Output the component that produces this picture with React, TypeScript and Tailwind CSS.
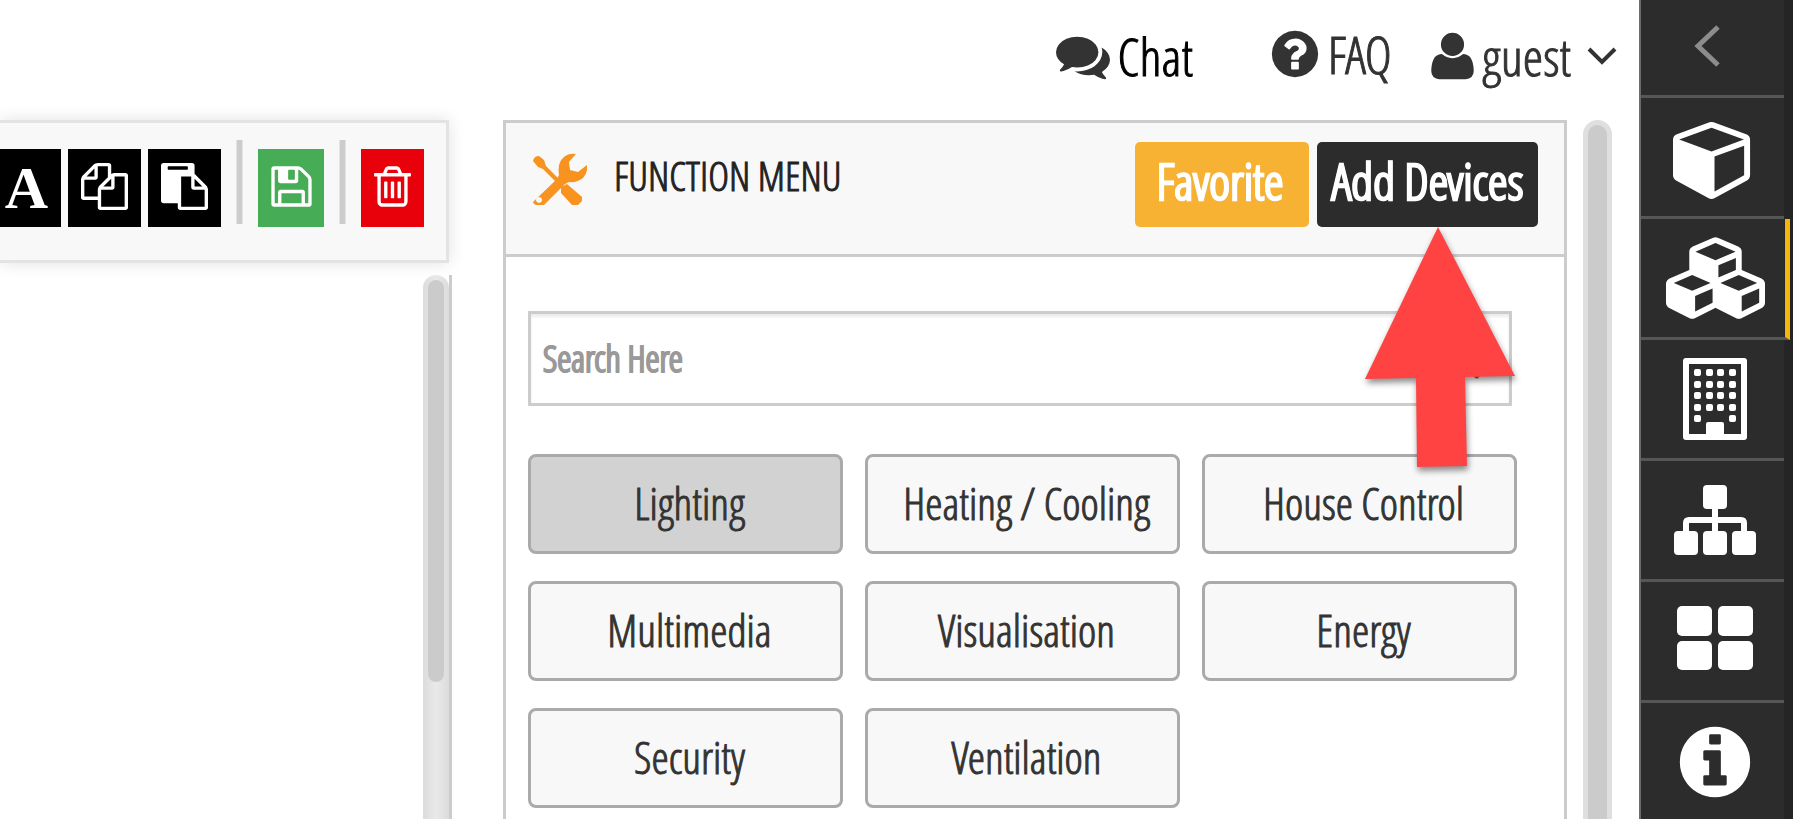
import { useState } from "react";
import type { ReactNode } from "react";

const categories = [
  "Lighting",
  "Heating / Cooling",
  "House Control",
  "Multimedia",
  "Visualisation",
  "Energy",
  "Security",
  "Ventilation",
];

type IconProps = { children: ReactNode; className: string; box?: string };

function Icon({ children, className, box = "0 0 1792 1792" }: IconProps) {
  return (
    <svg viewBox={box} className={className} fill="currentColor" aria-hidden="true">
      {children}
    </svg>
  );
}

const paths = {
  comments:
    "M1408 768q0 139-94 257t-256.5 186.5-353.5 68.5q-86 0-176-16-124 88-278 128-36 9-86 16h-3q-11 0-20.5-8t-11.5-21q-1-3-1-6.5t.5-6.5 2-6l2.5-5 3.5-5.5 4-5 4.5-5 4-4.5q5-6 23-25t26-29.5 22.5-29 25-38.5 20.5-44q-124-72-195-177t-71-224q0-139 94-257t256.5-186.5 353.5-68.5 353.5 68.5 256.5 186.5 94 257zm384 256q0 120-71 224.5t-195 176.5q10 24 20.5 44t25 38.5 22.5 29 26 29.5 23 25q1 1 4 4.5t4.5 5 4 5 3.5 5.5l2.5 5 2 6 .5 6.5-1 6.5q-3 14-13 22t-22 7q-50-7-86-16-154-40-278-128-90 16-176 16-271 0-472-132 58 4 88 4 161 0 309-45t264-129q125-92 192-212t67-254q0-77-23-152 129 71 204 178t75 230z",
  question:
    "M1024 1376v-192q0-14-9-23t-23-9h-192q-14 0-23 9t-9 23v192q0 14 9 23t23 9h192q14 0 23-9t9-23zm256-672q0-88-55.5-163t-138.5-116-170-41q-243 0-371 213-15 24 8 42l132 100q7 6 19 6 16 0 25-12 53-68 86-92 34-24 86-24 48 0 85.5 26t37.5 59q0 38-20 61t-68 45q-63 28-115.5 86.5t-52.5 125.5v36q0 14 9 23t23 9h192q14 0 23-9t9-23q0-19 21.5-49.5t54.5-49.5q32-18 49-28.5t46-35 44.5-48 28-60.5 12.5-81zm384 192q0 209-103 385.5t-279.5 279.5-385.5 103-385.5-103-279.5-279.5-103-385.5 103-385.5 279.5-279.5 385.5-103 385.5 103 279.5 279.5 103 385.5z",
  user:
    "M1600 1405q0 120-73 189.5t-194 69.5h-874q-121 0-194-69.5t-73-189.5q0-53 3.5-103.5t14-109 26.5-108.5 43-97.5 62-81 85.5-53.5 111.5-20q9 0 42 21.5t74.5 48 108 48 133.5 21.5 133.5-21.5 108-48 74.5-48 42-21.5q61 0 111.5 20t85.5 53.5 62 81 43 97.5 26.5 108.5 14 109 3.5 103.5zm-320-893q0 159-112.5 271.5t-271.5 112.5-271.5-112.5-112.5-271.5 112.5-271.5 271.5-112.5 271.5 112.5 112.5 271.5z",
  copy:
    "M1696 384q40 0 68 28t28 68v1216q0 40-28 68t-68 28h-960q-40 0-68-28t-28-68v-288h-544q-40 0-68-28t-28-68v-672q0-40 20-88t48-76l408-408q28-28 76-48t88-20h416q40 0 68 28t28 68v328q68-40 128-40h416zm-544 213l-299 299h299v-299zm-640-384l-299 299h299v-299zm196 647l316-316v-416h-384v416q0 40-28 68t-68 28h-416v640h512v-256q0-40 20-88t48-76zm956 804v-1152h-384v416q0 40-28 68t-68 28h-416v640h896z",
  paste:
    "M768 1664h896v-640h-416q-40 0-68-28t-28-68v-416h-384v1152zm256-1440v-64q0-13-9.5-22.5t-22.5-9.5h-704q-13 0-22.5 9.5t-9.5 22.5v64q0 13 9.5 22.5t22.5 9.5h704q13 0 22.5-9.5t9.5-22.5zm256 672h299l-299-299v299zm512 128v672q0 40-28 68t-68 28h-960q-40 0-68-28t-28-68v-160h-544q-40 0-68-28t-28-68v-1344q0-40 28-68t68-28h1088q40 0 68 28t28 68v328q21 13 36 28l408 408q28 28 48 76t20 88z",
  save:
    "M512 1536h768v-384h-768v384zm896 0h128v-896q0-14-10-38.5t-20-34.5l-281-281q-10-10-34-20t-39-10v416q0 40-28 68t-68 28h-576q-40 0-68-28t-28-68v-416h-128v1280h128v-416q0-40 28-68t68-28h832q40 0 68 28t28 68v416zm-384-928v-320q0-13-9.5-22.5t-22.5-9.5h-192q-13 0-22.5 9.5t-9.5 22.5v320q0 13 9.5 22.5t22.5 9.5h192q13 0 22.5-9.5t9.5-22.5zm640 32v928q0 40-28 68t-68 28h-1344q-40 0-68-28t-28-68v-1344q0-40 28-68t68-28h928q40 0 88 20t76 48l280 280q28 28 48 76t20 88z",
  trash:
    "M704 736v576q0 14-9 23t-23 9h-64q-14 0-23-9t-9-23v-576q0-14 9-23t23-9h64q14 0 23 9t9 23zm256 0v576q0 14-9 23t-23 9h-64q-14 0-23-9t-9-23v-576q0-14 9-23t23-9h64q14 0 23 9t9 23zm256 0v576q0 14-9 23t-23 9h-64q-14 0-23-9t-9-23v-576q0-14 9-23t23-9h64q14 0 23 9t9 23zm128 724v-948h-896v948q0 22 7 40.5t14.5 27 10.5 8.5h832q3 0 10.5-8.5t14.5-27 7-40.5zm-672-1076h448l-48-117q-7-9-17-11h-317q-10 2-17 11zm928 32v64q0 14-9 23t-23 9h-96v948q0 83-47 143.5t-113 60.5h-832q-66 0-113-58.5t-47-141.5v-952h-96q-14 0-23-9t-9-23v-64q0-14 9-23t23-9h309l70-167q15-37 54-63t79-26h320q40 0 79 26t54 63l70 167h309q14 0 23 9t9 23z",
  cube:
    "M896 1629l640-349v-636l-640 233v752zm-64-865l698-254-698-254-698 254zm832-252v768q0 35-18 65t-49 47l-704 384q-28 16-61 16t-61-16l-704-384q-31-17-49-47t-18-65v-768q0-40 23-73t61-47l704-256q22-8 44-8t44 8l704 256q38 14 61 47t23 73z",
  cubes:
    "M640 1632l384-192v-314l-384 164v342zm-64-454l404-173-404-173-404 173zm1088 454l384-192v-314l-384 164v342zm-64-454l404-173-404-173-404 173zm-448-293l384-165v-266l-384 164v267zm-64-379l441-189-441-189-441 189zm1088 518v416q0 36-19 67t-52 47l-448 224q-25 14-57 14t-57-14l-448-224q-4-2-7-4-2 2-7 4l-448 224q-25 14-57 14t-57-14l-448-224q-33-16-52-47t-19-67v-416q0-38 21.5-70t56.5-48l434-186v-400q0-38 21.5-70t56.5-48l448-192q23-10 50-10t50 10l448 192q35 16 56.5 48t21.5 70v400l434 186q36 16 57 48t21 70z",
  info:
    "M1152 1376v-160q0-14-9-23t-23-9h-96v-512q0-14-9-23t-23-9h-320q-14 0-23 9t-9 23v160q0 14 9 23t23 9h96v320h-96q-14 0-23 9t-9 23v160q0 14 9 23t23 9h448q14 0 23-9t9-23zm-128-896v-160q0-14-9-23t-23-9h-192q-14 0-23 9t-9 23v160q0 14 9 23t23 9h192q14 0 23-9t9-23zm640 416q0 209-103 385.5t-279.5 279.5-385.5 103-385.5-103-279.5-279.5-103-385.5 103-385.5 279.5-279.5 385.5-103 385.5 103 279.5 279.5 103 385.5z",
};

function BuildingIcon() {
  return (
    <Icon box="0 0 64 82" className="h-[82px] w-[64px]">
      <path fillRule="evenodd" d="M3 0h58q3 0 3 3v76q0 3-3 3H3q-3 0-3-3V3q0-3 3-3zM6 6v70h17V66q0-2 2-2h14q2 0 2 2v10h17V6z" />
      {[11, 23, 34, 46, 57].map((y) =>
        [11, 23, 34, 46].map((x) =>
          y === 57 && (x === 23 || x === 34) ? null : (
            <rect key={`${x}-${y}`} x={x} y={y} width="7" height="7" rx="2" />
          )
        )
      )}
    </Icon>
  );
}

function SitemapIcon() {
  return (
    <Icon box="0 0 82 70" className="h-[70px] w-[82px]">
      <rect x="29" y="0" width="24" height="24" rx="4" />
      <rect x="0" y="46" width="24" height="24" rx="4" />
      <rect x="29" y="46" width="24" height="24" rx="4" />
      <rect x="58" y="46" width="24" height="24" rx="4" />
      <path d="M12 48V38q0-3 3-3h52q3 0 3 3v10M41 22v26" fill="none" stroke="currentColor" strokeWidth="6" />
    </Icon>
  );
}

function GridIcon() {
  return (
    <Icon box="0 0 76 70" className="h-[70px] w-[76px]">
      <rect x="0" y="0" width="35" height="30" rx="5" />
      <rect x="41" y="0" width="35" height="30" rx="5" />
      <rect x="0" y="35" width="35" height="29" rx="5" />
      <rect x="41" y="35" width="35" height="29" rx="5" />
    </Icon>
  );
}

function ToolsIcon() {
  return (
    <svg viewBox="0 0 54 52" className="h-[52px] w-[54px] text-[#f7931e]" fill="currentColor" aria-hidden="true">
      <path d="M0 8q1-5 6-5l5 4 2 6 13 13-3 3-13-13-5-2z" />
      <path d="M0 49L24 26l2-4Q24 10 31 4q5-4 12-3l-7 8 1 8 8 2 9-7q1 8-4 13-6 5-14 4l-4 2L11 52H3q-3-1-3-3zm6-5a3 3 0 1 0 .1 0z" fillRule="evenodd" />
      <path d="M28 34l6-3 15 13v4l-4 4h-6L28 40z" />
    </svg>
  );
}

const navItems = [
  { label: "Device", icon: <Icon className="size-[83px]"><path d={paths.cube} /></Icon> },
  { label: "Devices", icon: <Icon box="0 0 2176 1792" className="h-[82px] w-[99px]"><path d={paths.cubes} /></Icon> },
  { label: "Building", icon: <BuildingIcon /> },
  { label: "Structure", icon: <SitemapIcon /> },
  { label: "Overview", icon: <GridIcon /> },
  { label: "Information", icon: <Icon className="size-[82px]"><path d={paths.info} /></Icon> },
];

function Sidebar() {
  const [active, setActive] = useState("Devices");

  return (
    <nav className="flex w-[154px] shrink-0 flex-col border-l-2 border-[#6b6b6b] bg-gradient-to-r from-[#2c2c2c] from-[143px] to-[#252525] to-[143px] text-white">
      <button
        aria-label="Back"
        className="mr-[9px] flex h-[98px] shrink-0 items-center justify-center border-b-3 border-[#565656] pb-1 pr-3"
      >
        <svg viewBox="0 0 26 42" className="h-[42px] w-[26px]" fill="none" stroke="#8c8c8c" strokeWidth="5" aria-hidden="true">
          <path d="M24 2L4 21l20 19" />
        </svg>
      </button>
      {navItems.map((item) => (
        <button
          key={item.label}
          aria-label={item.label}
          onClick={() => setActive(item.label)}
          className={
            active === item.label
              ? "mr-[3px] flex h-[121px] shrink-0 items-center justify-center border-r-5 border-b-3 border-r-[#f5b50a] border-b-[#565656] pl-1"
              : "mr-[9px] flex h-[121px] shrink-0 items-center justify-center border-b-3 border-[#565656] pl-1"
          }
        >
          {item.icon}
        </button>
      ))}
    </nav>
  );
}

function TopBar() {
  return (
    <header className="flex h-[120px] shrink-0 items-center justify-end pr-[22px] pb-2 text-[52px] leading-[60px] text-[#333]">
      <a href="#chat" className="flex items-center gap-2 text-black">
        <Icon className="size-[54px] text-[#333]"><path d={paths.comments} /></Icon>
        Chat
      </a>
      <a href="#faq" className="ml-[75px] flex items-center gap-[6px] pb-1">
        <Icon className="size-[54px]"><path d={paths.question} /></Icon>
        FAQ
      </a>
      <button className="ml-[39px] flex items-center gap-2">
        <Icon box="192 0 1408 1792" className="h-[54px] w-[43px]"><path d={paths.user} /></Icon>
        guest
        <svg viewBox="0 0 30 18" className="ml-2 h-[18px] w-[30px]" fill="none" stroke="currentColor" strokeWidth="4" aria-hidden="true">
          <path d="M2 2l13 13L28 2" />
        </svg>
      </button>
    </header>
  );
}

function Toolbar() {
  return (
    <div className="mr-[3px] flex h-[143px] items-start justify-end border-3 border-l-0 border-[#e3e3e3] bg-[#f8f8f8] pt-[17px] pr-[22px] text-white shadow-[0_0_16px_rgba(0,0,0,0.12)]">
      <button className="mt-[9px] mr-[7px] h-[78px] w-[73px] shrink-0 bg-black pl-1 font-['Liberation_Serif',serif] text-[60px] leading-[78px] font-bold [-webkit-text-stroke:0]">
        A
      </button>
      <button aria-label="Copy" className="mt-[9px] mr-[7px] flex h-[78px] w-[73px] shrink-0 items-center justify-center bg-black pb-1">
        <Icon className="size-[47px]"><path d={paths.copy} /></Icon>
      </button>
      <button aria-label="Paste" className="mt-[9px] mr-[15px] flex h-[78px] w-[73px] shrink-0 items-center justify-center bg-black pb-1">
        <Icon className="size-[47px]"><path d={paths.paste} /></Icon>
      </button>
      <span className="mr-[15px] h-[84px] w-[7px] shrink-0 border-x border-[#e3e3e3] bg-[#ccc]" />
      <button aria-label="Save" className="mt-[9px] mr-[15px] flex h-[78px] w-[66px] shrink-0 items-center justify-center bg-[#46ac56] pb-1">
        <Icon className="size-[47px]"><path d={paths.save} /></Icon>
      </button>
      <span className="mr-[15px] h-[84px] w-[7px] shrink-0 border-x border-[#e3e3e3] bg-[#ccc]" />
      <button aria-label="Delete" className="mt-[9px] flex h-[78px] w-[63px] shrink-0 items-center justify-center bg-[#e8000b] pb-1">
        <Icon className="size-[47px]"><path d={paths.trash} /></Icon>
      </button>
    </div>
  );
}

function FunctionMenu() {
  const [selected, setSelected] = useState("Lighting");

  return (
    <section className="flex min-w-0 flex-1 flex-col border-3 border-b-0 border-[#ccc]">
      <div className="flex items-start border-b-3 border-[#ccc] bg-[#f8f8f8] pt-[19px] pr-[26px] pb-[27px] pl-[27px]">
        <div className="mt-[11px]">
          <ToolsIcon />
        </div>
        <h1 className="mt-2 ml-[27px] text-[40px] leading-[52px] text-[#222]">FUNCTION MENU</h1>
        <button className="ml-auto h-[85px] w-[174px] rounded-[5px] bg-[#f7b234] pb-2 pr-1 text-[50px] leading-[76px] font-bold text-white">
          Favorite
        </button>
        <div className="relative ml-2">
          <button className="h-[85px] w-[221px] rounded-[5px] bg-[#2c2c2c] pb-2 text-[50px] leading-[76px] font-bold text-white">
            Add Devices
          </button>
          {/* pointer to the add button */}
          <svg viewBox="0 0 160 252" className="absolute top-full left-[48px] z-10 h-[252px] w-[160px] drop-shadow-[1px_4px_3px_rgba(0,0,0,0.45)]" aria-hidden="true">
            <path d="M73 0L150 149l-50 1 2 89-50 1-1-89-51 1z" fill="#ff4343" />
          </svg>
        </div>
      </div>

      <div className="pt-[54px] pr-[47px] pl-[22px]">
        <div className="mr-[5px] flex h-[95px] items-center border-3 border-[#ccc] pr-[27px] shadow-[inset_0_3px_3px_rgba(0,0,0,0.08)]">
          <input
            type="search"
            aria-label="Search"
            placeholder="Search Here"
            className="h-full min-w-0 flex-1 bg-transparent pl-3 text-[36px] font-bold text-[#333] outline-none placeholder:text-[#999]"
          />
          <svg viewBox="0 0 34 34" className="size-[44px]" fill="none" stroke="#a0703c" strokeWidth="4" strokeLinecap="round" aria-hidden="true">
            <circle cx="14" cy="14" r="10" />
            <path d="M22 22l8 8" />
          </svg>
        </div>

        <div className="mt-[48px] grid grid-cols-3 gap-x-[22px] gap-y-[27px]">
          {categories.map((name) => (
            <button
              key={name}
              onClick={() => setSelected(name)}
              className={
                selected === name
                  ? "h-[100px] rounded-[8px] border-3 border-[#aaa] bg-[#d2d2d2] pb-[2px] pl-2 text-[44px] leading-[52px] text-[#333]"
                  : "h-[100px] rounded-[8px] border-3 border-[#aaa] bg-[#f8f8f8] pb-[2px] pl-2 text-[44px] leading-[52px] text-[#333]"
              }
            >
              {name}
            </button>
          ))}
        </div>
      </div>
    </section>
  );
}

export default function App() {
  return (
    <div className="flex h-screen overflow-hidden bg-white font-['Open_Sans_Condensed_Light','Open_Sans_Condensed','Roboto_Condensed',sans-serif] [-webkit-text-stroke:1px]">
      <div className="flex min-w-0 flex-1 flex-col">
        <TopBar />
        <main className="flex min-h-0 flex-1">
          <div className="mr-[51px] flex w-[452px] shrink-0 flex-col">
            <Toolbar />
            <div className="mt-3 flex flex-1 justify-end border-r-3 border-[#ccc]">
              <div className="w-[26px] rounded-t-full bg-gradient-to-r from-[#dcdcdc] via-[#e9e9e9] to-[#dcdcdc] px-[5px] pt-[5px]">
                <div className="h-[402px] rounded-full bg-[#cbcbcb]" />
              </div>
            </div>
          </div>
          <FunctionMenu />
          <div className="mr-[27px] ml-4 w-[29px] shrink-0 rounded-t-full bg-[#dfdfdf] px-[5px] pt-[5px]">
            <div className="h-full rounded-t-full bg-[#cbcbcb]" />
          </div>
        </main>
      </div>
      <Sidebar />
    </div>
  );
}
